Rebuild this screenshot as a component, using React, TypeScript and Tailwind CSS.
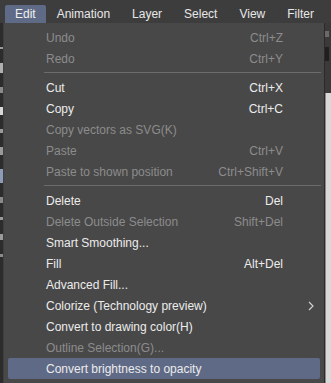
import React from "react";

type Item = { label: string; shortcut?: string; disabled?: boolean; sub?: boolean; active?: boolean } | { sep: true };

const items: Item[] = [
  { label: "Undo", shortcut: "Ctrl+Z", disabled: true },
  { label: "Redo", shortcut: "Ctrl+Y", disabled: true },
  { sep: true },
  { label: "Cut", shortcut: "Ctrl+X" },
  { label: "Copy", shortcut: "Ctrl+C" },
  { label: "Copy vectors as SVG(K)", disabled: true },
  { label: "Paste", shortcut: "Ctrl+V", disabled: true },
  { label: "Paste to shown position", shortcut: "Ctrl+Shift+V", disabled: true },
  { sep: true },
  { label: "Delete", shortcut: "Del" },
  { label: "Delete Outside Selection", shortcut: "Shift+Del", disabled: true },
  { label: "Smart Smoothing..." },
  { label: "Fill", shortcut: "Alt+Del" },
  { label: "Advanced Fill..." },
  { label: "Colorize (Technology preview)", sub: true },
  { label: "Convert to drawing color(H)" },
  { label: "Outline Selection(G)...", disabled: true },
  { label: "Convert brightness to opacity", active: true },
];

const bar = ["Edit", "Animation", "Layer", "Select", "View", "Filter"];

export default function App() {
  return (
    <div
      className="w-[331px] h-[383px] overflow-hidden bg-[#3a3a3a] flex flex-col text-[12px] leading-none"
      style={{ fontFamily: '"Liberation Sans", Arial, sans-serif' }}
    >
      <div className="h-[23px] shrink-0 bg-[#3d3d3d] flex items-end pl-[5px]">
        {bar.map((b, i) => (
          <div
            key={b}
            className={
              i === 0
                ? "h-[18px] px-[10px] flex items-center bg-[#5f6a86] rounded-t-[2px] text-[#f0f0f0]"
                : "h-[18px] px-[11px] flex items-center text-[#e8e8e8]"
            }
          >
            {b}
          </div>
        ))}
      </div>
      <div className="flex flex-1 min-h-0">
        <div className="w-[4px] shrink-0 bg-[#2c2c2c] flex flex-col gap-[14px] pt-[24px] border-r border-[#3f3f3f]">
          <div className="h-[2px] w-[3px] bg-[#9a9a9a]" />
          <div className="h-[10px] w-[3px] bg-[#b0b0b0]" />
          <div className="h-[6px] w-[3px] bg-[#8a8a8a]" />
          <div className="h-[8px] w-[3px] bg-[#d8d8d8]" />
          <div className="h-[4px] w-[3px] bg-[#9a9a9a]" />
          <div className="h-[8px] w-[3px] bg-[#9a9a9a]" />
          <div className="h-[14px] w-[3px] bg-[#8d9bb5]" />
          <div className="h-[6px] w-[3px] bg-[#8a8a8a]" />
          <div className="h-[3px] w-[3px] bg-[#9a9a9a]" />
          <div className="h-[6px] w-[3px] bg-[#9a9a9a]" />
          <div className="h-[3px] w-[3px] bg-[#8a8a8a]" />
        </div>
        <div className="w-[320px] shrink-0 bg-[#484848] pt-[4px] flex flex-col">
          {items.map((it, i) =>
            "sep" in it ? (
              <div key={i} className="h-[8px] pt-[3px] pl-[40px] pr-[3px]">
                <div className="h-px bg-[#6c6c6c]" />
              </div>
            ) : (
              <div
                key={i}
                className={
                  "h-[21px] mx-[4px] pl-[38px] pr-[37px] flex items-center justify-between rounded-[2px] " +
                  (it.active ? "bg-[#5f6a86] " : "") +
                  (it.disabled ? "text-[#8c8c8c]" : "text-[#ececec]")
                }
              >
                <span>{it.label}</span>
                {it.shortcut ? <span>{it.shortcut}</span> : null}
                {it.sub ? (
                  <svg width="6" height="10" viewBox="0 0 6 10" className="-mr-[31px]">
                    <path d="M1 1 L5 5 L1 9" fill="none" stroke="#d0d0d0" strokeWidth="1.2" />
                  </svg>
                ) : null}
              </div>
            )
          )}
        </div>
        <div className="w-[1px] shrink-0 bg-[#2a2a2a]" />
        <div className="flex-1 flex flex-col">
          <div className="h-[70px] bg-[#3a3a3a] flex flex-col gap-[10px] pt-[8px]">
            <div className="h-[6px] w-[4px] bg-[#6a6a6a]" />
            <div className="h-[14px] w-[4px] bg-[#1f1f1f]" />
          </div>
          <div className="flex-1 bg-[#d8d8d8] border-l border-[#8a8a8a]" />
        </div>
      </div>
    </div>
  );
}
